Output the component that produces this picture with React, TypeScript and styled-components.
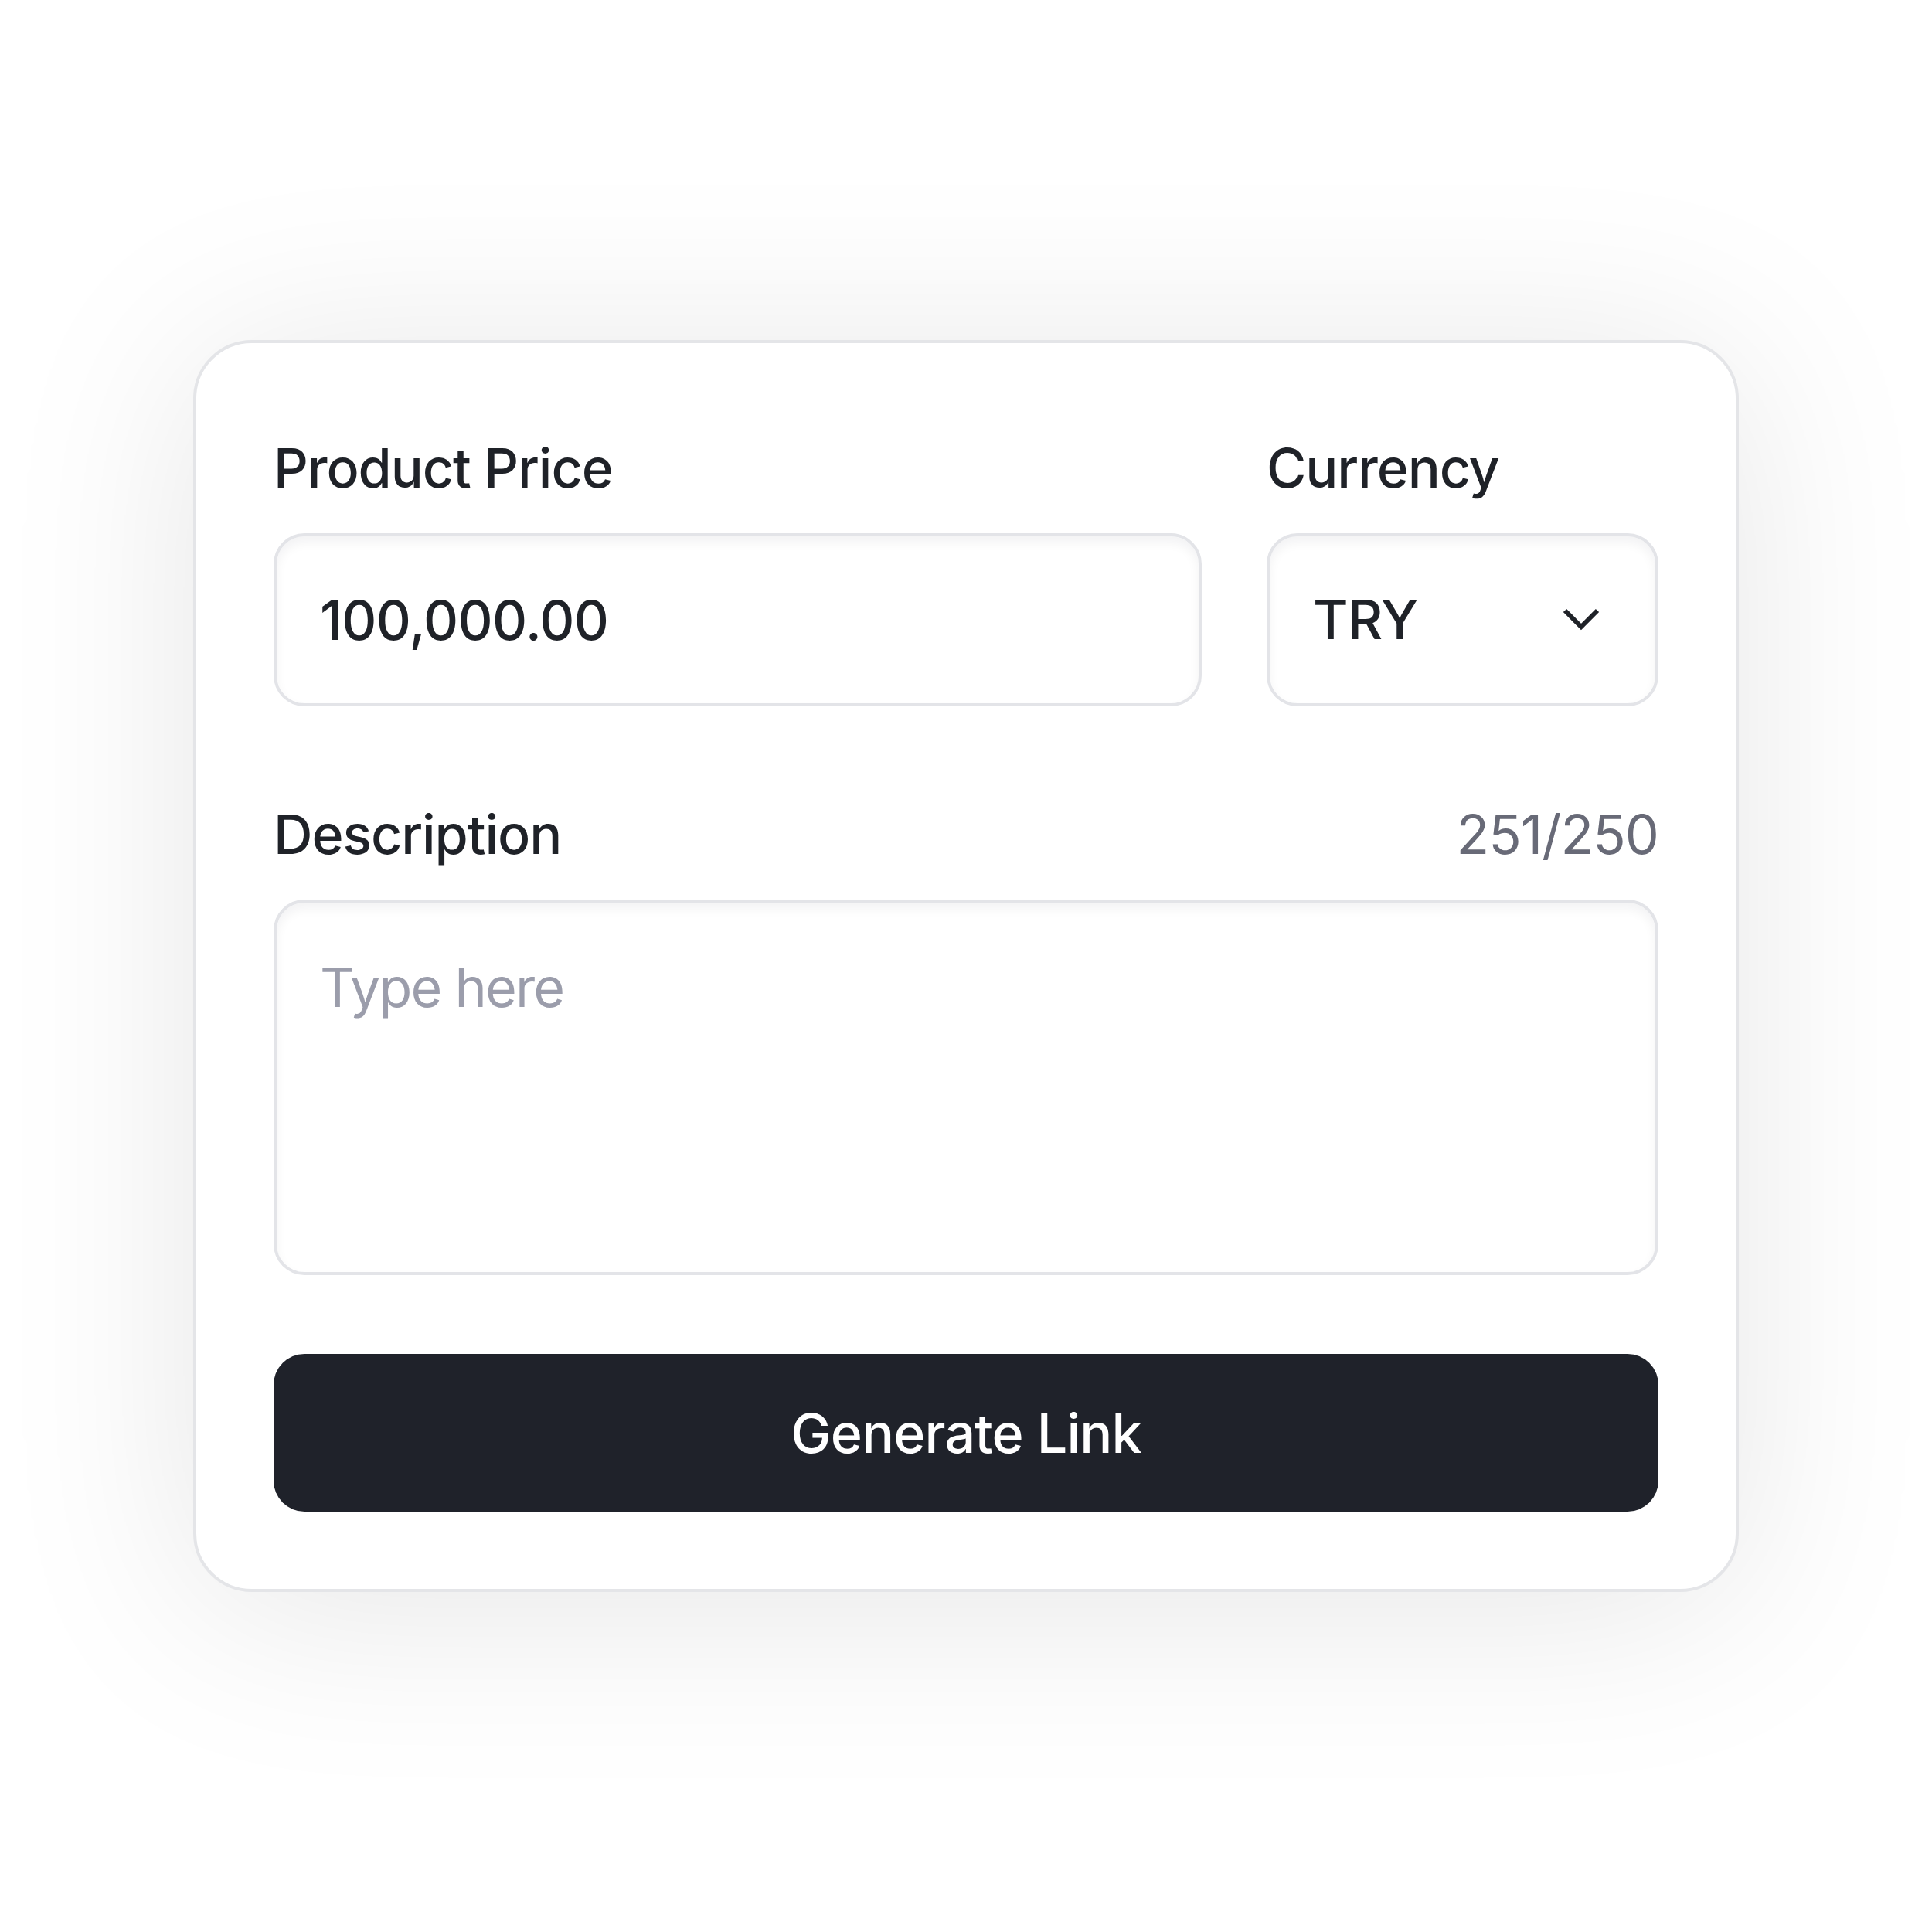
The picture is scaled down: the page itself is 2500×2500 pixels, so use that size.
import React from "react";
import styled, { createGlobalStyle } from "styled-components";

const GlobalStyle = createGlobalStyle`
  html, body {
    margin: 0;
    padding: 0;
    background: #ffffff;
  }
  body {
    font-family: Inter, "Liberation Sans", Arial, sans-serif;
    -webkit-font-smoothing: antialiased;
  }
  *, *::before, *::after {
    box-sizing: border-box;
  }
`;

const Page = styled.main`
  width: 2500px;
  height: 2500px;
  display: flex;
  align-items: center;
  justify-content: center;
  background: #ffffff;
`;

const Card = styled.section`
  width: 2000px;
  height: 1620px;
  background: #ffffff;
  border: 4px solid #e4e5e8;
  border-radius: 76px;
  box-shadow: 0 20px 270px rgba(0, 0, 0, 0.1);
  padding: 120px 100px 100px;
  display: flex;
  flex-direction: column;
`;

const TopRow = styled.div`
  display: grid;
  grid-template-columns: 1201px 507px;
  column-gap: 84px;
`;

const Field = styled.div`
  display: flex;
  flex-direction: column;
  gap: 42px;
`;

const DescriptionField = styled(Field)`
  margin-top: 124px;
`;

const LabelRow = styled.div`
  display: flex;
  justify-content: space-between;
  align-items: baseline;
`;

const Label = styled.label`
  font-family: Inter, "Liberation Sans", Arial, sans-serif;
  font-size: 70px;
  line-height: 84px;
  font-weight: 500;
  letter-spacing: -0.016em;
  color: #1f2228;
`;

const Counter = styled.span`
  font-family: Inter, "Liberation Sans", Arial, sans-serif;
  font-size: 70px;
  line-height: 84px;
  font-weight: 400;
  letter-spacing: -0.014em;
  color: #686a77;
`;

const boxBase = `
  width: 100%;
  background: #ffffff;
  border: 4px solid #e3e4e8;
  border-radius: 40px;
  box-shadow: inset 0 8px 14px rgba(16, 24, 40, 0.05);
  font-family: Inter, "Liberation Sans", Arial, sans-serif;
  font-size: 70px;
  letter-spacing: -0.01em;
  color: #1f2228;
  outline: none;
  margin: 0;
`;

const PriceInput = styled.input`
  ${boxBase}
  height: 224px;
  padding: 0 56px;
  font-weight: 500;
`;

const Select = styled.div`
  ${boxBase}
  height: 224px;
  padding: 0 72px 0 56px;
  display: flex;
  align-items: center;
  justify-content: space-between;
  font-weight: 500;
  line-height: 84px;
`;

const Chevron = styled.svg`
  width: 48px;
  height: 30px;
  display: block;
  flex: none;
`;

const TextArea = styled.textarea`
  ${boxBase}
  height: 486px;
  padding: 68px 56px;
  line-height: 84px;
  font-weight: 400;
  letter-spacing: -0.026em;
  resize: none;
  display: block;

  &::placeholder {
    color: #9b9dab;
    opacity: 1;
  }
`;

const Button = styled.button`
  margin-top: 102px;
  width: 100%;
  height: 205px;
  border: none;
  border-radius: 40px;
  background: #1f222a;
  color: #ffffff;
  font-family: Inter, "Liberation Sans", Arial, sans-serif;
  font-size: 70px;
  font-weight: 500;
  letter-spacing: -0.012em;
  cursor: pointer;
  padding: 0;
`;

export default function App() {
  return (
    <>
      <GlobalStyle />
      <Page>
        <Card>
          <TopRow>
            <Field>
              <Label htmlFor="price">Product Price</Label>
              <PriceInput id="price" value="100,000.00" readOnly />
            </Field>
            <Field>
              <Label>Currency</Label>
              <Select role="button">
                <span>TRY</span>
                <Chevron viewBox="0 0 48 30" fill="none">
                  <polyline
                    points="3,3 24,24 45,3"
                    stroke="#1f2228"
                    strokeWidth="6"
                    strokeLinecap="butt"
                    strokeLinejoin="miter"
                  />
                </Chevron>
              </Select>
            </Field>
          </TopRow>
          <DescriptionField>
            <LabelRow>
              <Label htmlFor="desc">Description</Label>
              <Counter>251/250</Counter>
            </LabelRow>
            <TextArea id="desc" placeholder="Type here" />
          </DescriptionField>
          <Button>Generate Link</Button>
        </Card>
      </Page>
    </>
  );
}
